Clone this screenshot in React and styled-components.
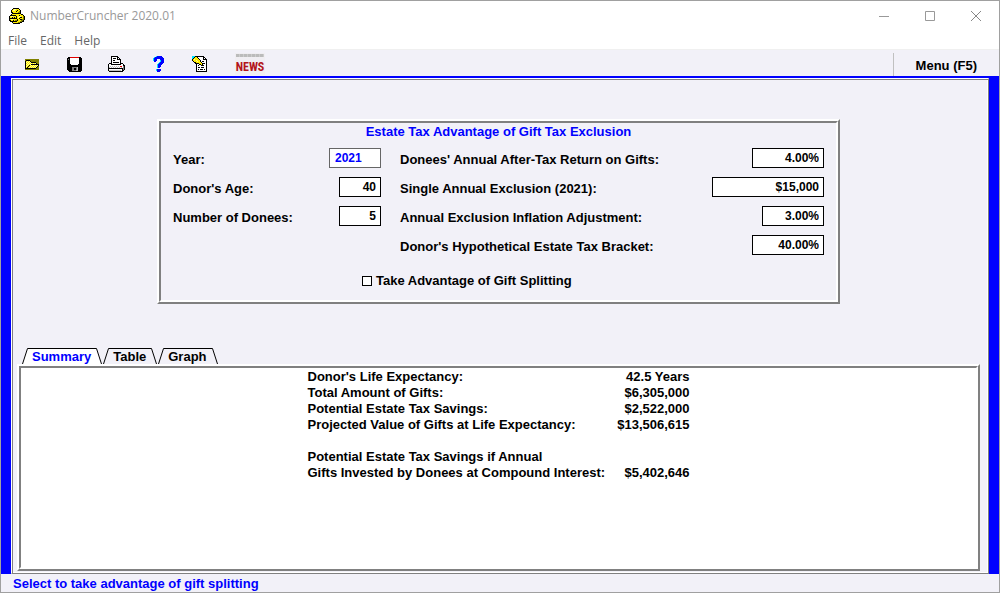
import React, { useState } from 'react';
import styled, { createGlobalStyle } from 'styled-components';

const GlobalStyle = createGlobalStyle`
  * {
    box-sizing: border-box;
  }

  body {
    margin: 0;
    background: #f2f1f8;
    color: #000;
    font-family: 'Liberation Sans', Arial, sans-serif;
    font-size: 13px;
    font-weight: bold;
    line-height: 16px;
  }

  button, input, select {
    font: inherit;
    color: inherit;
  }
`;

const Window = styled.div`
  display: flex;
  flex-direction: column;
  min-height: 100vh;
  border: 1px solid #a0a0a0;
`;

const TitleBar = styled.header`
  display: flex;
  align-items: center;
  gap: 5px;
  height: 29px;
  padding-left: 8px;
  background: #fff;
  color: #999;
  font-family: 'Open Sans', 'Noto Sans', sans-serif;
`;

const WindowTitle = styled.h1`
  flex: 1;
  margin: 0;
  font-size: 12px;
  font-weight: normal;
`;

const WindowButtons = styled.div`
  display: flex;
`;

const WindowButton = styled.button`
  display: flex;
  align-items: center;
  justify-content: center;
  width: 46px;
  height: 29px;
  padding: 0;
  border: none;
  background: none;
`;

const MenuBar = styled.nav`
  display: flex;
  gap: 13px;
  height: 20px;
  padding: 2px 0 0 7px;
  background: #fff;
  border-bottom: 1px solid #f0f0f0;
  color: #666;
  font-family: 'Open Sans', 'Noto Sans', sans-serif;
  font-size: 12px;
`;

const MenuItem = styled.button`
  padding: 0;
  border: none;
  background: none;
  font-weight: normal;
`;

const ToolBar = styled.div`
  display: flex;
  align-items: flex-end;
  height: 26px;
  padding-left: 10px;
`;

const ToolButton = styled.button`
  display: flex;
  align-items: center;
  justify-content: center;
  width: ${props => (props.$wide ? '58px' : '42px')};
  height: 24px;
  padding: 0;
  border: none;
  background: none;
`;

const NewsMark = styled.span`
  display: flex;
  flex-direction: column;
  align-items: center;
  width: 30px;
  height: 22px;
  background: #f0eef2;
  color: #b3151b;
  font-family: 'Liberation Sans Narrow', 'Roboto Condensed', Roboto, sans-serif;
  font-size: 12px;
  line-height: 16px;

  &::before {
    content: '';
    width: 28px;
    height: 3px;
    margin: 1px 0 2px;
    background: repeating-linear-gradient(90deg, #bbb 0 3px, #ccc 3px 4px);
  }
`;

const MenuButton = styled.button`
  align-self: stretch;
  margin-left: auto;
  margin-top: 3px;
  padding: 2px 22px 0;
  border: none;
  border-left: 1px solid #c0c0c0;
  background: none;
`;

const Frame = styled.main`
  display: flex;
  flex: 1;
  padding: 2px 10px 0;
  background: #00f;
`;

const Panel = styled.div`
  display: flex;
  flex: 1;
  flex-direction: column;
  min-width: 0;
  padding: 40px 8px 2px 5px;
  background: #f2f1f8;
  border: 1px solid;
  border-color: #fff #808080 #808080 #fff;
  box-shadow: inset 1px 1px #808080, inset -1px -1px #fff;
`;

/* two pixel ridge, light outside and dark inside */
const Ridge = styled.div`
  border: 2px solid;
  border-color: #fff #808080 #808080 #fff;

  > * {
    border: 2px solid;
    border-color: #808080 #fff #fff #808080;
  }
`;

const FormFrame = styled(Ridge)`
  width: 100%;
  max-width: 683px;
  margin: 0 auto;
`;

const Form = styled.form`
  padding: 1px 12px 11px;
`;

const FormTitle = styled.h2`
  margin: 0 0 8px;
  color: #00f;
  font-size: 13px;
  text-align: center;
`;

const Columns = styled.div`
  display: grid;
  grid-template-columns: 208px 1fr;
  column-gap: 19px;
`;

const Column = styled.div`
  display: flex;
  flex-direction: column;
  gap: 9px;
`;

const Field = styled.div`
  display: flex;
  align-items: center;
  justify-content: space-between;
  height: 20px;

  label {
    padding-top: 4px;
  }
`;

const Entry = styled.input`
  width: ${props => props.$width}px;
  height: 20px;
  padding: 0 4px;
  border: 1px solid #000;
  border-radius: 0;
  background: #fff;
  font-size: 12px;
  text-align: right;
`;

const YearSelect = styled.select`
  appearance: none;
  width: 52px;
  height: 20px;
  padding: 0 5px;
  border: 1px solid #666;
  border-radius: 0;
  background: #fff;
  color: #00f;
  font-size: 12px;
`;

const SplitOption = styled.label`
  display: flex;
  align-items: center;
  gap: 4px;
  margin: 18px 0 0 189px;

  input {
    appearance: none;
    width: 10px;
    height: 10px;
    margin: 0;
    border: 1px solid #000;
    background: #fff;
  }

  input:checked {
    background: #000;
    box-shadow: inset 0 0 0 1px #fff;
  }
`;

const Tabs = styled.div`
  display: flex;
  gap: 1px;
  margin: 44px 0 0 5px;
`;

const Tab = styled.button`
  display: flex;
  height: 16px;
  padding: 0;
  border: none;
  background: none;
  color: ${props => (props.$active ? '#00f' : '#000')};

  svg {
    fill: ${props => (props.$active ? '#fff' : 'none')};
  }

  span {
    height: 16px;
    padding: 0 5px 0 4px;
    border-top: 1px solid #000;
    background: ${props => (props.$active ? '#fff' : 'none')};
  }
`;

const ResultFrame = styled(Ridge)`
  display: flex;
  flex: 1;
`;

const Results = styled.div`
  flex: 1;
  padding-top: 1px;
  background: #fff;
`;

const ResultTable = styled.table`
  width: 382px;
  margin: 0 auto;
  border-collapse: collapse;

  th {
    padding: 0;
    text-align: left;
    white-space: nowrap;
  }

  td {
    padding: 0;
    text-align: right;
    vertical-align: bottom;
  }
`;

const Spacer = styled.tr`
  height: 16px;
`;

const StatusBar = styled.footer`
  height: 18px;
  padding: 2px 12px 0;
  color: #00f;
`;

const COLORS = {
  k: '#000',
  w: '#fff',
  y: '#ffee00',
  l: '#ffff99',
  o: '#808000',
  g: '#c0c0c0',
  d: '#808080',
  r: '#e00000',
  b: '#00f',
  c: '#00e5ff',
};

const APP_ICON = [
  '....kkkkkk......',
  '...kyllyyyk.....',
  '..kyllyykyyk....',
  '..kyyyykyyok....',
  '..kkyyyyyook....',
  '...kkkkkkkkk....',
  '..kyyyyyyyyykk..',
  '.kkkkkkyyykyyyk.',
  'kyllyyykyyllyyok',
  'kyykykykylykkyok',
  'kkkkkkkkyykyyyok',
  'kyllyyyykyykkook',
  'kkyykyookyyyook.',
  '.kkkkkkkyyyookk.',
  '...kyyyyyookk...',
  '....kkkkkkk.....',
];

const FOLDER_ICON = [
  'oooooooooooooo',
  'okkkkooooooooo',
  'kylylkoooooooo',
  'klylylkkkkkooo',
  'kylylylylylkoo',
  'klylylkkkkkkkk',
  'kylykylylylylk',
  'klykylylylylko',
  'kykylylylylkoo',
  'kkkkkkkkkkkooo',
  'oooooooooooooo',
];

const SAVE_ICON = [
  '.kkrrrrrrrrrkk.',
  'kkkwwwwwwwwwkkk',
  'kdkwwwwwwwwwkkk',
  'kkkwwwwwwwwwkkk',
  'kkkwwwwwwwwwkkk',
  'kkkwwwwwwwwwkkk',
  'kkkwwwwwwwwwkkk',
  'kkkkwwwwwwwkkkk',
  'kkkkkkkkkkkkkkk',
  'kkkkkkkkkkkkkkk',
  'kkkkkdddddgkkkk',
  'kkkkkddkkdgkkkk',
  'kkkkkddkkdgkkkk',
  '.kkkkddddggkkkk',
  '..kkkkkkkkkkkk.',
];

const PRINT_ICON = [
  '...kkkkkkk.......',
  '...kwwwwwkk......',
  '...kwkkkwkwk.....',
  '...kwwwwwkkkk....',
  '...kwkkwwwwwk....',
  '...kwwwwwwwwk....',
  '...kwkkkkkkwk....',
  '.kkkwwwwwwwwkkk..',
  'kwwkkkkkkkkkkwwk.',
  'kwwwwwwwwwwwwwwkk',
  'kwgwgwgwgwgwrrwdk',
  'kgwgwgwgwgwgwgwdk',
  'kkkkkkkkkkkkkkkdk',
  'kwwwwwwwwwwwwwkdk',
  'kggggggggggggwkk.',
  '.kkkkkkkkkkkkkk..',
];

const HELP_ICON = [
  '...cbbbbb..',
  '.cbbbbbbbb.',
  'cbbbbbbbbbb',
  'cbbb...bbbb',
  'cbbb...cbbb',
  '.bb....cbbb',
  '......cbbbb',
  '.....cbbbb.',
  '....cbbbb..',
  '....cbbb...',
  '....cbbb...',
  '....cbb....',
  '...........',
  '...cbbbb...',
  '...cbbbb...',
  '....bbb....',
];

const NOTE_ICON = [
  'ccckkkkkkkkk....',
  'cckyykwwwwwkk...',
  'ckyyyykwwwwkwk..',
  'kylyyyykwwwkkkk.',
  'kyyylyyykwwwwwk.',
  '.kyyylyykwkkwwk.',
  '..kkyyyyykwwwwk.',
  '...kkkkyyykkkwk.',
  '....kwwkkykwwwk.',
  '....kwkwwkkkwwk.',
  '....kwwwwwwwwwk.',
  '....kwkkwkkkwwk.',
  '....kwwwwwwwwwk.',
  '....kwkwkkkwkwk.',
  '....kwwwwwwwwwk.',
  '....kkkkkkkkkkk.',
];

const PixelIcon = ({ rows }) => (
  <svg width={rows[0].length} height={rows.length} shapeRendering="crispEdges" aria-hidden="true">
    {rows.map((row, y) =>
      row.split('').map((key, x) =>
        key === '.' ? null : <rect key={`${x}-${y}`} x={x} y={y} width="1" height="1" fill={COLORS[key]} />
      )
    )}
  </svg>
);

const TOOLS = [
  { name: 'Open', rows: FOLDER_ICON },
  { name: 'Save', rows: SAVE_ICON },
  { name: 'Print', rows: PRINT_ICON },
  { name: 'Help', rows: HELP_ICON },
  { name: 'Notes', rows: NOTE_ICON },
];

const RATES = [
  { id: 'return', label: "Donees' Annual After-Tax Return on Gifts:", value: '4.00%', width: 72 },
  { id: 'exclusion', label: 'Single Annual Exclusion (2021):', value: '$15,000', width: 112 },
  { id: 'inflation', label: 'Annual Exclusion Inflation Adjustment:', value: '3.00%', width: 62 },
  { id: 'bracket', label: "Donor's Hypothetical Estate Tax Bracket:", value: '40.00%', width: 72 },
];

const RESULTS = [
  ["Donor's Life Expectancy:", '42.5 Years'],
  ['Total Amount of Gifts:', '$6,305,000'],
  ['Potential Estate Tax Savings:', '$2,522,000'],
  ['Projected Value of Gifts at Life Expectancy:', '$13,506,615'],
];

const App = () => {
  const [tab, setTab] = useState('Summary');

  return (
    <>
      <GlobalStyle />
      <Window>
        <TitleBar>
          <PixelIcon rows={APP_ICON} />
          <WindowTitle>NumberCruncher 2020.01</WindowTitle>
          <WindowButtons>
            <WindowButton aria-label="Minimize">
              <svg width="10" height="10"><path d="M0 5.5h10" stroke="#999" /></svg>
            </WindowButton>
            <WindowButton aria-label="Maximize">
              <svg width="10" height="10"><path d="M.5.5h9v9h-9z" fill="none" stroke="#999" /></svg>
            </WindowButton>
            <WindowButton aria-label="Close">
              <svg width="10" height="10"><path d="M0 0l10 10M10 0L0 10" stroke="#888" /></svg>
            </WindowButton>
          </WindowButtons>
        </TitleBar>
        <MenuBar>
          <MenuItem>File</MenuItem>
          <MenuItem>Edit</MenuItem>
          <MenuItem>Help</MenuItem>
        </MenuBar>
        <ToolBar>
          {TOOLS.map(tool => (
            <ToolButton key={tool.name} aria-label={tool.name}>
              <PixelIcon rows={tool.rows} />
            </ToolButton>
          ))}
          <ToolButton $wide>
            <NewsMark>NEWS</NewsMark>
          </ToolButton>
          <MenuButton>Menu (F5)</MenuButton>
        </ToolBar>
        <Frame>
          <Panel>
            <FormFrame>
              <Form>
                <FormTitle>Estate Tax Advantage of Gift Tax Exclusion</FormTitle>
                <Columns>
                  <Column>
                    <Field>
                      <label htmlFor="year">Year:</label>
                      <YearSelect id="year" defaultValue="2021">
                        <option>2020</option>
                        <option>2021</option>
                      </YearSelect>
                    </Field>
                    <Field>
                      <label htmlFor="age">Donor's Age:</label>
                      <Entry id="age" $width={42} defaultValue="40" />
                    </Field>
                    <Field>
                      <label htmlFor="donees">Number of Donees:</label>
                      <Entry id="donees" $width={42} defaultValue="5" />
                    </Field>
                  </Column>
                  <Column>
                    {RATES.map(rate => (
                      <Field key={rate.id}>
                        <label htmlFor={rate.id}>{rate.label}</label>
                        <Entry id={rate.id} $width={rate.width} defaultValue={rate.value} />
                      </Field>
                    ))}
                  </Column>
                </Columns>
                <SplitOption>
                  <input type="checkbox" />
                  Take Advantage of Gift Splitting
                </SplitOption>
              </Form>
            </FormFrame>
            <Tabs role="tablist">
              {['Summary', 'Table', 'Graph'].map(name => (
                <Tab key={name} role="tab" aria-selected={tab === name} $active={tab === name} onClick={() => setTab(name)}>
                  <svg width="6" height="16"><path d="M.5 16L5.5.5H6V16z" stroke="none" /><path d="M.5 16L5.5.5H6" fill="none" stroke="#000" /></svg>
                  <span>{name}</span>
                  <svg width="6" height="16"><path d="M5.5 16L.5.5H0V16z" stroke="none" /><path d="M5.5 16L.5.5H0" fill="none" stroke="#000" /></svg>
                </Tab>
              ))}
            </Tabs>
            <ResultFrame>
              <Results>
                <ResultTable>
                  <tbody>
                    {RESULTS.map(([label, value]) => (
                      <tr key={label}>
                        <th scope="row">{label}</th>
                        <td>{value}</td>
                      </tr>
                    ))}
                    <Spacer />
                    <tr>
                      <th scope="row">
                        Potential Estate Tax Savings if Annual
                        <br />
                        Gifts Invested by Donees at Compound Interest:
                      </th>
                      <td>$5,402,646</td>
                    </tr>
                  </tbody>
                </ResultTable>
              </Results>
            </ResultFrame>
          </Panel>
        </Frame>
        <StatusBar>Select to take advantage of gift splitting</StatusBar>
      </Window>
    </>
  );
};

export default App;
